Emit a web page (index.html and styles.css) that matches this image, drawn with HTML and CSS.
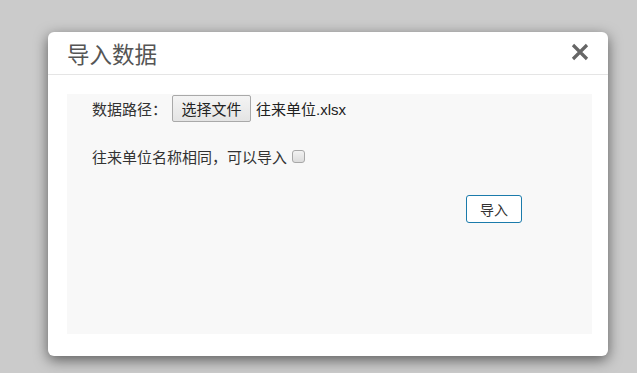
FILE: index.html
```html
<!DOCTYPE html>
<html lang="zh-CN">
<head>
  <meta charset="UTF-8" />
  <meta name="viewport" content="width=device-width, initial-scale=1.0"/>
  <title>导入数据</title>
  <link rel="stylesheet" href="styles.css">
</head>
<body>

  <div class="modal">
    <div class="modal-header">
      <div class="modal-title">导入数据</div>
      <button class="close-btn" aria-label="关闭">
        <svg width="18" height="18" viewBox="0 0 18 18">
          <path d="M2 2 L16 16 M16 2 L2 16" stroke="#666" stroke-width="3.2" stroke-linecap="butt" />
        </svg>
      </button>
    </div>

    <div class="modal-body">
      <div class="import-panel">
        <div class="form-row">
          <span class="label">数据路径：</span>
          <button class="file-btn">选择文件</button>
          <span class="file-name">往来单位.xlsx</span>
        </div>

        <div class="form-row option-row">
          <span class="label">往来单位名称相同，可以导入</span>
          <input type="checkbox" class="same-check" />
        </div>

        <div class="actions">
          <button class="import-btn">导入</button>
        </div>
      </div>
    </div>
  </div>

</body>
</html>
```

FILE: styles.css
```css
html, body {
  margin: 0;
  padding: 0;
  height: 100%;
  background-color: #cbcbcb;
  font-family: "Liberation Sans", "Noto Sans CJK SC", sans-serif;
  color: #333;
  overflow: hidden;
}

.modal {
  margin: 32px 0 0 48px;
  width: 560px;
  height: 324px;
  box-sizing: border-box;
  background-color: #fff;
  border-radius: 6px;
  box-shadow: 0 4px 14px rgba(0, 0, 0, 0.55);
  display: flex;
  flex-direction: column;
}

.modal-header {
  height: 43px;
  box-sizing: border-box;
  border-bottom: 1px solid #e5e5e5;
  display: flex;
  justify-content: space-between;
  align-items: center;
  padding: 0 19px 0 19px;
}

.modal-title {
  font-size: 22.5px;
  color: #555;
  margin-top: -1px;
}

.close-btn {
  border: none;
  background: none;
  padding: 0;
  margin-top: -2px;
  cursor: pointer;
  display: flex;
}

.modal-body {
  padding: 19px 16px 22px 19px;
  flex: 1;
  display: flex;
}

.import-panel {
  flex: 1;
  background-color: #f8f8f8;
  padding: 1px 25px 0 25px;
  font-size: 15px;
}

.form-row {
  display: flex;
  align-items: center;
  height: 27px;
}

.label {
  color: #333;
}

.file-btn {
  margin-left: 5px;
  height: 27px;
  width: 79px;
  padding: 0;
  font-family: inherit;
  font-size: 15px;
  color: #222;
  background: linear-gradient(#f4f4f4, #e4e4e4);
  border: 1px solid #a9a9a9;
  border-radius: 2px;
}

.file-name {
  margin-left: 5px;
  color: #222;
}

.option-row {
  margin-top: 21px;
}

.same-check {
  appearance: none;
  -webkit-appearance: none;
  width: 13px;
  height: 13px;
  margin: 0 0 0 5px;
  border: 1px solid #a8a8a8;
  border-radius: 3px;
  background: linear-gradient(#f2f2f2, #dcdcdc);
}

.actions {
  display: flex;
  justify-content: flex-end;
  margin-top: 25px;
  padding-right: 45px;
}

.import-btn {
  width: 56px;
  height: 28px;
  padding: 0;
  font-family: inherit;
  font-size: 14px;
  color: #333;
  background-color: #fff;
  border: 1px solid #1b7bab;
  border-radius: 3px;
  cursor: pointer;
}
```
